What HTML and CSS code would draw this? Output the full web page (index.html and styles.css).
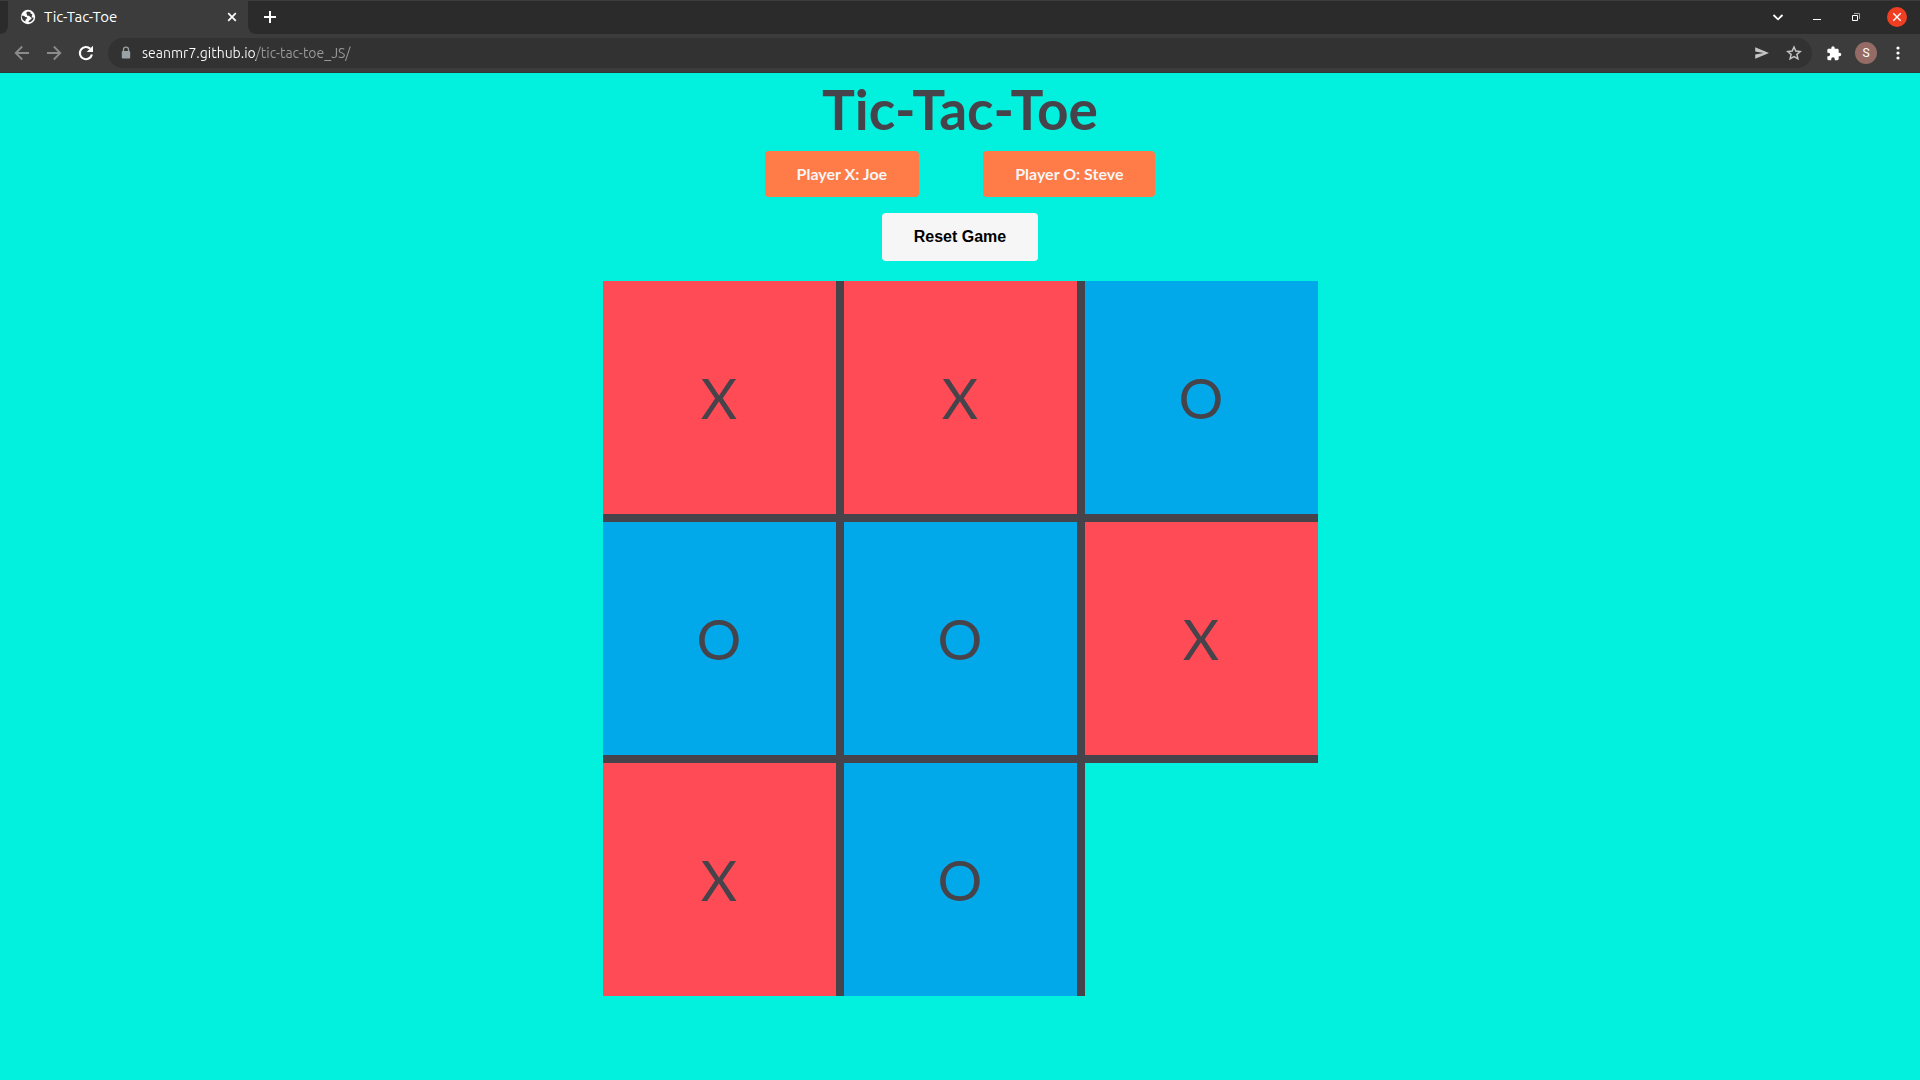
FILE: index.html
```html
<!DOCTYPE html>
<html lang="en">
<head>
<meta charset="utf-8">
<title>Tic-Tac-Toe</title>
<link rel="stylesheet" href="styles.css">
</head>
<body>
<header class="browser">
  <div class="tab-strip">
    <div class="strip-edge"></div>
    <div class="tab">
      <svg class="favicon" viewBox="0 0 16 16" width="16" height="16" aria-hidden="true"><circle cx="8" cy="8" r="7.200" fill="#fff"/><path d="M1.600 6.500c1.500.3 2.500.1 3.200.9.600.8 1.800.6 2.300 1.200.4.600-.2 1.100-.9 1.500-.7.500-.4 1.500-1.100 2.300C3 11.500 1.400 9.500 1.600 6.500zM8 2.600c-1 .3-1.700.8-1.600 1.600.1.800.7 1 .6 1.800 0 .8 1 .8 1.900.8 1 0 .9 1.400 1.900 1.500 1 .1 1 .9.500 1.600-.6.700-1.700.6-1.900 1.500-.2.800-.8 1.100-1.500 1.700 3 .7 5.600-1.500 5.900-4.500-1 .2-1.800-.1-2-.9-.2-.9.600-1.300.5-2.100-.1-.8-1.100-.4-1.600-1-.5-.7.200-1.300-.5-1.700z" fill="#3b3b3b"/></svg>
      <span class="tab-title">Tic-Tac-Toe</span>
      <button class="icon-button small" aria-label="Close tab"><svg viewBox="0 0 16 16" width="16" height="16"><path d="M4.200 4.200l7.600 7.600M11.800 4.200l-7.600 7.600" stroke="#fff" stroke-width="1.700"/></svg></button>
    </div>
    <div class="strip-rest">
      <button class="icon-button" aria-label="New tab"><svg viewBox="0 0 16 16" width="16" height="16"><path d="M8 2v12M2 8h12" stroke="#fff" stroke-width="2"/></svg></button>
      <div class="window-controls">
        <button class="icon-button" aria-label="Search tabs"><svg viewBox="0 0 16 16" width="16" height="16"><path d="M3.500 6L8 10.300 12.500 6" fill="none" stroke="#fff" stroke-width="1.800"/></svg></button>
        <button class="icon-button" aria-label="Minimize"><svg viewBox="0 0 16 16" width="16" height="16"><path d="M4 10.500h8" stroke="#fff"/></svg></button>
        <button class="icon-button" aria-label="Restore"><svg viewBox="0 0 16 16" width="16" height="16"><path d="M6 4.500h5.500V10" fill="none" stroke="#a5a5a5"/><path d="M4.500 6.500h5v5h-5z" fill="none" stroke="#fff"/></svg></button>
        <button class="icon-button close" aria-label="Close window"><svg viewBox="0 0 20 20" width="20" height="20"><circle cx="10" cy="10" r="10" fill="#f03e22"/><path d="M6.300 6.300l7.400 7.400M13.700 6.300l-7.400 7.400" stroke="#fff" stroke-width="1.400"/></svg></button>
      </div>
    </div>
  </div>
  <div class="toolbar">
    <button class="icon-button" aria-label="Back"><svg viewBox="0 0 16 16" width="16" height="16"><path d="M15 8H2M8.200 1.500L1.700 8l6.500 6.500" fill="none" stroke="#8b8b8b" stroke-width="1.800"/></svg></button>
    <button class="icon-button" aria-label="Forward"><svg viewBox="0 0 16 16" width="16" height="16"><path d="M1 8h13M7.800 1.500L14.300 8l-6.500 6.500" fill="none" stroke="#8b8b8b" stroke-width="1.800"/></svg></button>
    <button class="icon-button" aria-label="Reload"><svg viewBox="0 0 16 16" width="16" height="16"><path d="M13.900 9.500A6.100 6.100 0 1 1 12.300 3.800" fill="none" stroke="#fff" stroke-width="2.100"/><path d="M15 .8v6.300H8.700z" fill="#fff"/></svg></button>
    <div class="omnibox">
      <svg class="lock" viewBox="0 0 12 14" width="12" height="14" aria-hidden="true"><path d="M3.500 6V3.600a2.500 2.500 0 0 1 5 0V6" fill="none" stroke="#9aa2a6" stroke-width="1.300"/><rect x="1.800" y="5" width="8.400" height="7.500" rx="1" fill="#9aa2a6"/></svg>
      <input class="address" type="text" aria-label="Address" value="seanmr7.github.io/tic-tac-toe_JS/">
      <button class="icon-button" aria-label="Share"><svg viewBox="0 0 16 16" width="16" height="16"><path d="M1.200 2.200L15 8 1.200 13.800V9.500L9.500 8 1.200 6.500z" fill="#c4c4c4"/></svg></button>
      <button class="icon-button" aria-label="Bookmark"><svg viewBox="0 0 16 16" width="16" height="16"><path d="M8 2l1.800 4.100 4.500.4-3.400 2.900 1 4.400L8 11.500l-3.900 2.300 1-4.400-3.400-2.900 4.500-.4z" fill="none" stroke="#c4c4c4" stroke-width="1.500"/></svg></button>
    </div>
    <button class="icon-button" aria-label="Extensions"><svg viewBox="0 0 24 24" width="17" height="17"><path d="M20.500 11H19V7c0-1.100-.9-2-2-2h-4V3.500a2.500 2.500 0 0 0-5 0V5H4c-1.100 0-2 .9-2 2v3.800h1.500a2.700 2.700 0 0 1 0 5.400H2V20c0 1.100.9 2 2 2h3.800v-1.500a2.700 2.700 0 0 1 5.400 0V22H17c1.100 0 2-.9 2-2v-4h1.500a2.500 2.500 0 0 0 0-5z" fill="#fff"/></svg></button>
    <button class="avatar" aria-label="Profile S">S</button>
    <button class="icon-button" aria-label="Menu"><svg viewBox="0 0 16 16" width="16" height="16" fill="#fff"><circle cx="8" cy="3" r="1.600"/><circle cx="8" cy="8" r="1.600"/><circle cx="8" cy="13" r="1.600"/></svg></button>
  </div>
</header>
<main class="game">
  <h1 class="title">Tic-Tac-Toe</h1>
  <div class="players">
    <div class="player">Player X: Joe</div>
    <div class="player">Player O: Steve</div>
  </div>
  <button class="reset">Reset Game</button>
  <div class="board">
    <button class="cell x">X</button>
    <button class="cell x">X</button>
    <button class="cell o">O</button>
    <button class="cell o">O</button>
    <button class="cell o">O</button>
    <button class="cell x">X</button>
    <button class="cell x">X</button>
    <button class="cell o">O</button>
    <button class="cell" aria-label="Empty square"></button>
  </div>
</main>
</body>
</html>
```
FILE: styles.css
```css
* {
  box-sizing: border-box;
}

body {
  margin: 0;
  min-height: 100vh;
  display: flex;
  flex-direction: column;
  background: #02f1df;
  color: #47434a;
  font-family: Lato, sans-serif;
}

button {
  border: 0;
  padding: 0;
  cursor: pointer;
}

/* Browser chrome */
.browser {
  background: #3c3c3c;
  border-bottom: 1px solid #2b3a39;
  font-family: Ubuntu, "Noto Sans", sans-serif;
  font-size: 14px;
  color: #fff;
}

.tab-strip {
  display: flex;
  height: 34px;
  border-top: 1px solid #3c3c3c;
}

.strip-edge {
  width: 8px;
  background: #2b2b2b;
  border-bottom-right-radius: 8px;
}

.tab {
  display: flex;
  align-items: center;
  gap: 8px;
  width: 240px;
  padding: 0 8px 2px 12px;
}

.tab-title {
  flex: 1;
  font-size: 15px;
  line-height: 20px;
}

.strip-rest {
  flex: 1;
  display: flex;
  align-items: center;
  justify-content: space-between;
  padding: 0 13px 2px 14px;
  background: #2b2b2b;
  border-bottom-left-radius: 8px;
}

.window-controls {
  display: flex;
  align-items: center;
  gap: 23px;
}

.icon-button {
  display: flex;
  flex: none;
  align-items: center;
  justify-content: center;
  width: 16px;
  height: 20px;
  background: none;
}

.icon-button.close {
  width: 20px;
}

.toolbar {
  display: flex;
  align-items: center;
  gap: 16px;
  height: 38px;
  padding: 0 14px;
}

.omnibox {
  flex: 1;
  display: flex;
  align-items: center;
  gap: 16px;
  height: 30px;
  margin: 0 -2px;
  padding: 0 10px 0 12px;
  border-radius: 15px;
  background: #323232;
}

.lock {
  flex: none;
  margin-right: -6px;
}

.address {
  flex: 1;
  min-width: 0;
  height: 20px;
  padding: 0;
  border: 0;
  outline: 0;
  font: inherit;
  color: transparent;
  background: linear-gradient(90deg, #fff 114px, #9b9b9b 114px);
  -webkit-background-clip: text;
  background-clip: text;
}

.avatar {
  width: 22px;
  height: 22px;
  margin: 0 -3px;
  border-radius: 50%;
  background: #956c65;
  color: #fff;
  font: 12px Roboto, sans-serif;
}

/* Game */
.game {
  display: flex;
  flex-direction: column;
  align-items: center;
  padding: 2px 16px 32px;
}

.title {
  margin: 0 0 8px;
  font-size: 55px;
  line-height: 68px;
}

.players {
  display: flex;
  gap: 64px;
  margin-bottom: 16px;
}

.player {
  padding: 12px 32px;
  border-radius: 4px;
  background: #ff7b47;
  color: #f6f6f6;
  font-size: 16px;
  font-weight: 700;
  line-height: 22px;
}

.reset {
  margin-bottom: 20px;
  padding: 12px 32px;
  border-radius: 4px;
  background: #f6f6f6;
  color: #000;
  font: 700 16px/24px "Liberation Sans", sans-serif;
}

.board {
  display: grid;
  grid-template-columns: repeat(3, 1fr);
  gap: 8px;
  width: 100%;
  max-width: 715px;
}

.cell {
  aspect-ratio: 1;
  background: none;
  color: inherit;
  font: 56px Lato, sans-serif;
}

/* Grid lines trail each square to the right and below */
.cell:not(:nth-child(3n)) {
  box-shadow: 8px 0 #47434a;
}

.cell:nth-child(-n+6) {
  box-shadow: 0 8px #47434a;
}

.cell:nth-child(-n+6):not(:nth-child(3n)) {
  box-shadow: 8px 0 #47434a, 0 8px #47434a, 8px 8px #47434a;
}

.x {
  background: #ff4b55;
}

.o {
  background: #01a9ea;
}
```
